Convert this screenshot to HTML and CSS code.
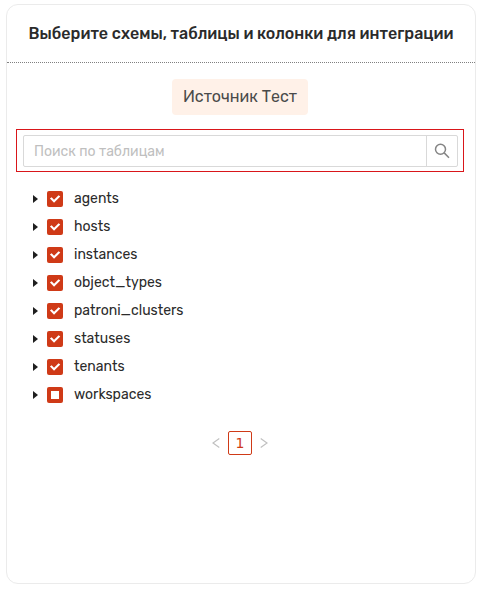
FILE: index.html
```html
<!DOCTYPE html>
<html lang="ru">
    <head>
        <meta charset="UTF-8">
        <meta name="viewport" content="width=device-width, initial-scale=1.0">
        <title>Интеграция</title>
        <link rel="stylesheet" href="styles.css">
    </head>
    <body>
        <main class="card">
            <header class="card-header">
                <h1>Выберите схемы, таблицы и колонки для интеграции</h1>
            </header>
            <div class="card-body">
                <h2 class="source">Источник Тест</h2>
                <form class="search-box">
                    <div class="search">
                        <input type="text" class="search-input" placeholder="Поиск по таблицам" aria-label="Поиск по таблицам">
                        <button type="submit" class="search-button" aria-label="Найти">
                            <svg width="16" height="16" viewBox="0 0 16 16" fill="none" stroke="#858585" stroke-width="1.5">
                                <circle cx="6.5" cy="6.2" r="5"/>
                                <path d="M10.2 9.9L15 14.7"/>
                            </svg>
                        </button>
                    </div>
                </form>
                <ul class="tree">
                    <li><button class="arrow" aria-label="Развернуть agents"></button><input type="checkbox" id="agents" checked><label for="agents">agents</label></li>
                    <li><button class="arrow" aria-label="Развернуть hosts"></button><input type="checkbox" id="hosts" checked><label for="hosts">hosts</label></li>
                    <li><button class="arrow" aria-label="Развернуть instances"></button><input type="checkbox" id="instances" checked><label for="instances">instances</label></li>
                    <li><button class="arrow" aria-label="Развернуть object_types"></button><input type="checkbox" id="object_types" checked><label for="object_types">object_types</label></li>
                    <li><button class="arrow" aria-label="Развернуть patroni_clusters"></button><input type="checkbox" id="patroni_clusters" checked><label for="patroni_clusters">patroni_clusters</label></li>
                    <li><button class="arrow" aria-label="Развернуть statuses"></button><input type="checkbox" id="statuses" checked><label for="statuses">statuses</label></li>
                    <li><button class="arrow" aria-label="Развернуть tenants"></button><input type="checkbox" id="tenants" checked><label for="tenants">tenants</label></li>
                    <li><button class="arrow" aria-label="Развернуть workspaces"></button><input type="checkbox" id="workspaces"><label for="workspaces">workspaces</label></li>
                </ul>
                <nav class="pagination" aria-label="Страницы">
                    <button class="page-step" aria-label="Назад" disabled>
                        <svg width="8" height="10" viewBox="0 0 8 10" fill="none" stroke="#c0c0c0" stroke-width="1.2"><path d="M7.3 0.6L1 5l6.3 4.4"/></svg>
                    </button>
                    <a href="#" class="page" aria-current="page">1</a>
                    <button class="page-step" aria-label="Вперёд" disabled>
                        <svg width="8" height="10" viewBox="0 0 8 10" fill="none" stroke="#c0c0c0" stroke-width="1.2"><path d="M0.7 0.6L7 5L0.7 9.4"/></svg>
                    </button>
                </nav>
            </div>
        </main>
        <script>
            // only part of the columns is selected
            document.querySelector('#workspaces').indeterminate = true;
        </script>
    </body>
</html>
```
FILE: styles.css
```css
* {
    box-sizing: border-box;
}
body {
    font-family: Rubik, Roboto, sans-serif;
    font-size: 14px;
    color: #2b2b2b;
    margin: 0;
    padding: 4px 5px 5px 6px;
    min-height: 100vh;
    display: flex;
    background-color: #ffffff;
}
button {
    font-family: inherit;
    border: none;
    background: none;
    padding: 0;
    cursor: pointer;
}
.card {
    flex: 1;
    min-width: 0;
    border: 1px solid #ebebeb;
    border-radius: 12px;
}
.card-header {
    padding: 17px 8px 16px;
    border-bottom: 1px dotted #808080;
    text-align: center;
}
h1 {
    margin: 0;
    font-size: 16px;
    line-height: 24px;
    font-weight: 500;
}
.card-body {
    display: flex;
    flex-direction: column;
    padding: 16px 11px 16px 9px;
}
.source {
    align-self: center;
    margin: 0 0 14px;
    padding: 6px 11px;
    border-radius: 4px;
    background-color: #fff1e8;
    color: #4a4a4a;
    font-size: 16px;
    line-height: 24px;
    font-weight: 400;
}
.search-box {
    border: 1px solid #d9161a;
    padding: 5px 5px 4px 6px;
}
.search {
    display: flex;
    height: 32px;
    border: 1px solid #d9d9d9;
    border-radius: 2px;
}
.search-input {
    flex: 1;
    min-width: 0;
    border: none;
    outline: none;
    background: none;
    padding: 0 10px;
    font-family: inherit;
    font-size: 14px;
}
.search-input::placeholder {
    color: #bfbfbf;
}
.search-button {
    width: 31px;
    border-left: 1px solid #d9d9d9;
    display: flex;
    align-items: center;
    justify-content: center;
}
.tree {
    list-style: none;
    margin: 13px 0 0;
    padding: 0 0 0 17px;
}
.tree li {
    display: flex;
    align-items: center;
    height: 28px;
}
.arrow {
    width: 14px;
    height: 20px;
}
.arrow::before {
    content: "";
    display: block;
    width: 0;
    border: 4px solid transparent;
    border-left: 5px solid #1f1f1f;
    border-right: none;
}
.tree input {
    appearance: none;
    width: 16px;
    height: 16px;
    margin: 0 11px 0 0;
    border-radius: 2px;
    background-color: #cf3a17;
    display: grid;
    place-items: center;
}
.tree input::before {
    background-color: #ffffff;
}
.tree input:checked::before {
    content: "";
    width: 12px;
    height: 8px;
    clip-path: polygon(8% 44%, 22% 28%, 42% 60%, 80% 4%, 94% 20%, 42% 98%);
}
.tree input:indeterminate::before {
    content: "";
    width: 8px;
    height: 8px;
}
.tree label {
    font-size: 14px;
    line-height: 20px;
}
.pagination {
    display: flex;
    justify-content: center;
    margin-top: 22px;
}
.page {
    width: 24px;
    height: 24px;
    border: 1px solid #cf3a17;
    border-radius: 2px;
    color: #cf3a17;
    font-family: "DejaVu Sans", Verdana, sans-serif;
    font-size: 14px;
    line-height: 22px;
    text-align: center;
    text-decoration: none;
}
.page-step {
    width: 24px;
    height: 24px;
    display: flex;
    align-items: center;
    justify-content: center;
}
```
